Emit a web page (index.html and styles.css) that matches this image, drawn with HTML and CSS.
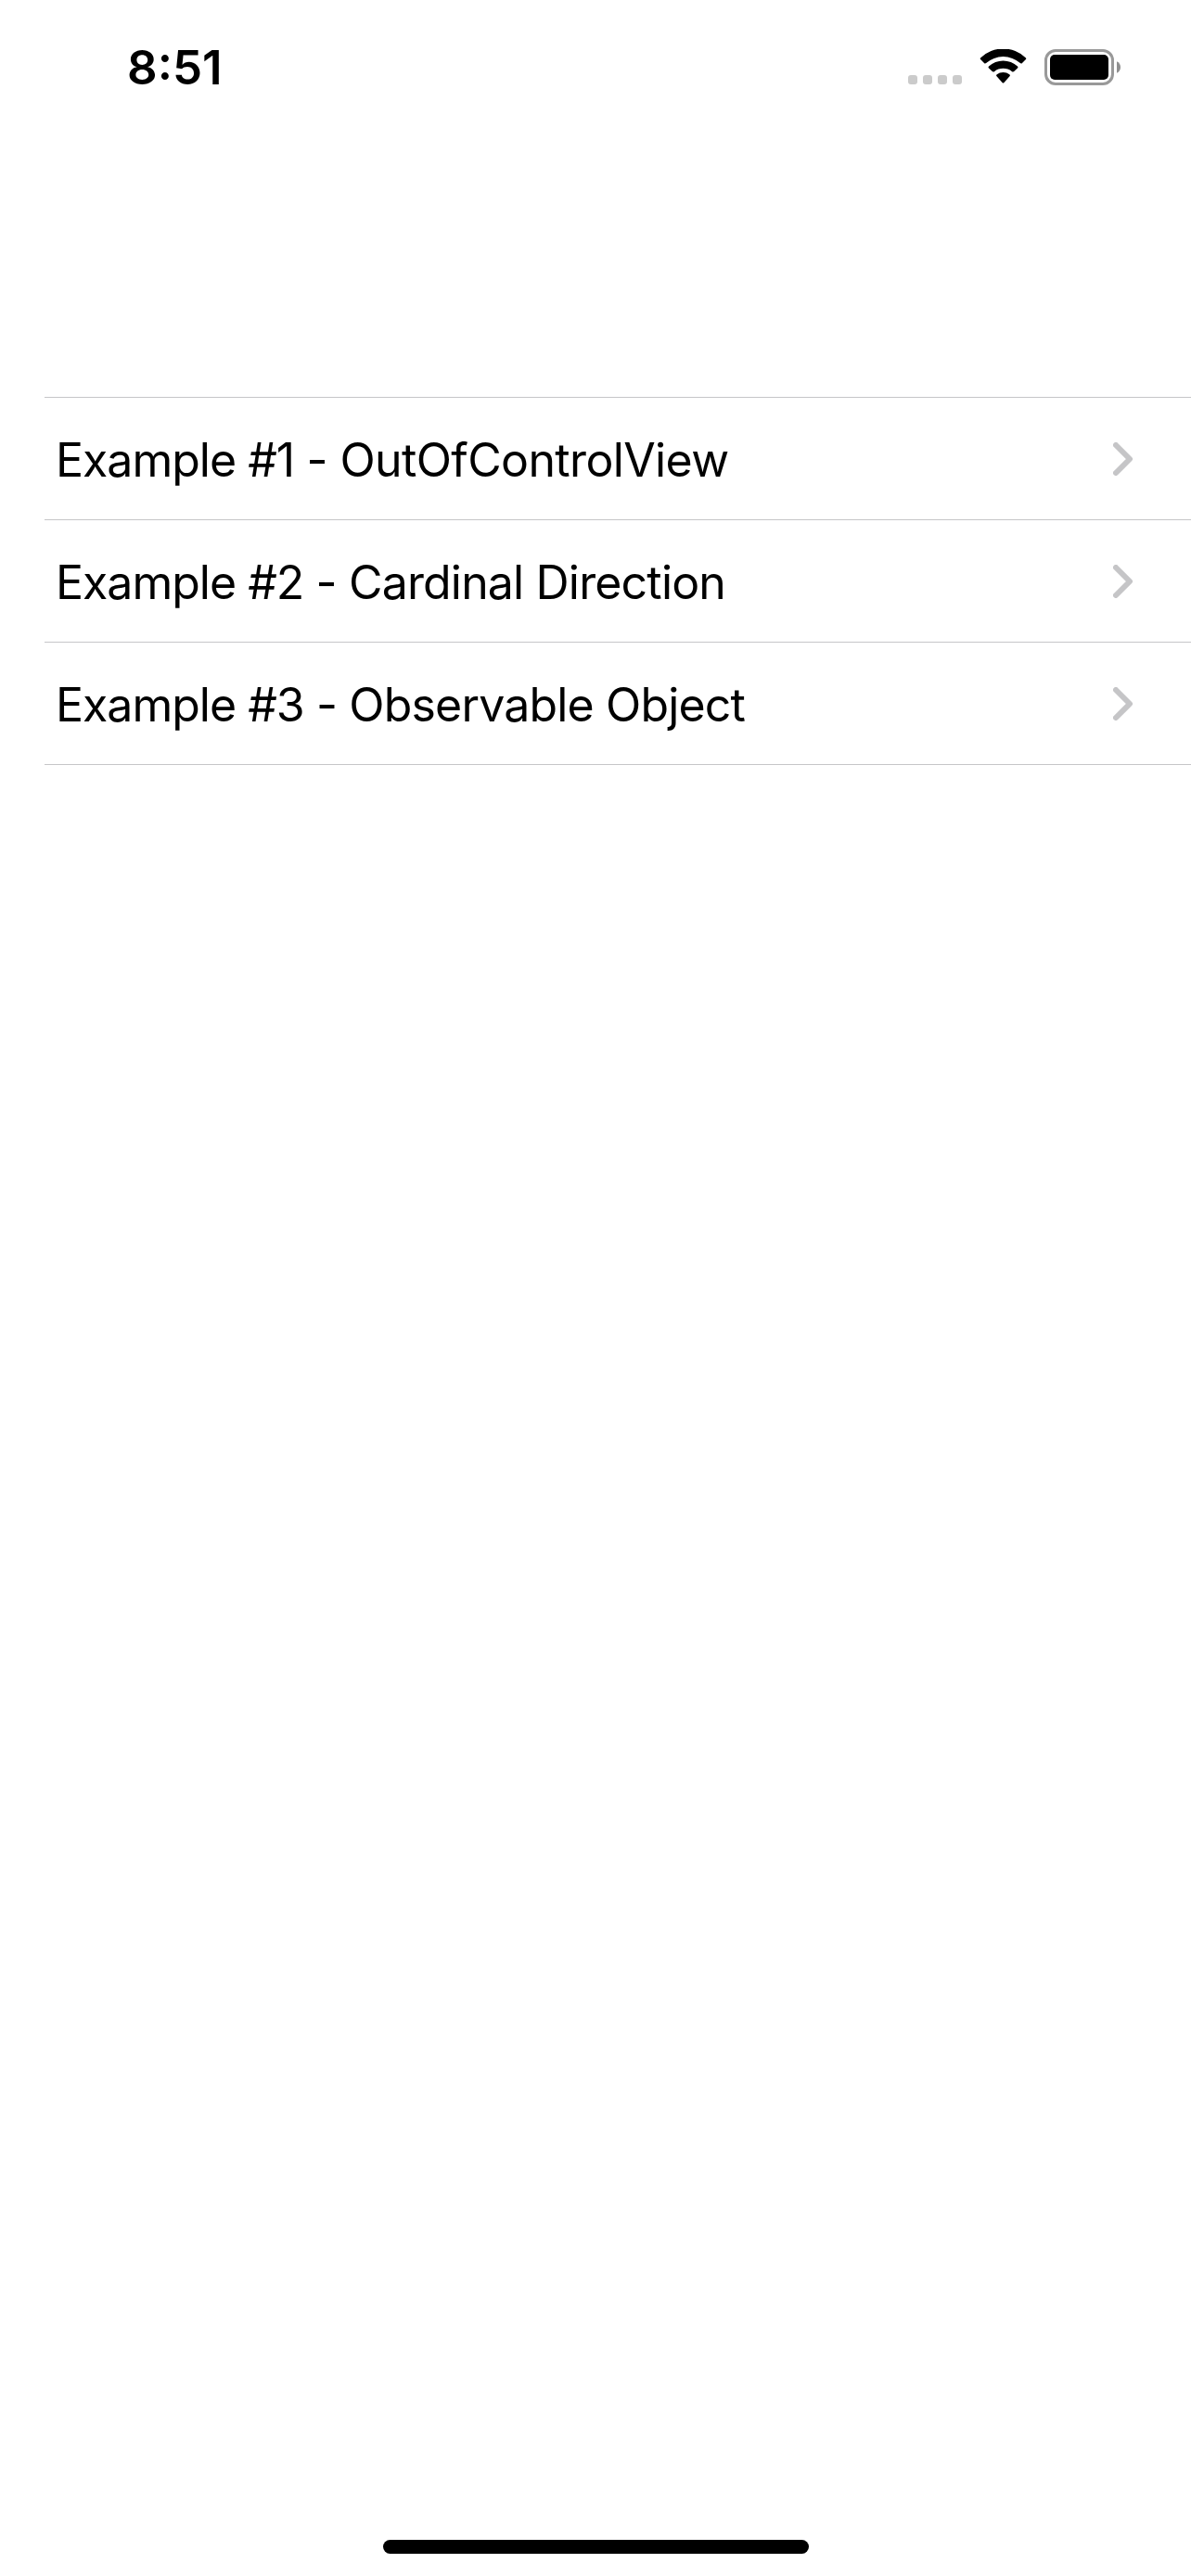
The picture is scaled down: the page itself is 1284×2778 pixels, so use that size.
FILE: index.html
```html
<!DOCTYPE html>
<html lang="en">
<head>
<meta charset="utf-8">
<title>Examples</title>
<link rel="stylesheet" href="styles.css">
</head>
<body>
<div class="screen">
  <header class="status-bar">
    <span class="time">8:51</span>
    <div class="indicators">
      <svg class="signal" width="58" height="10" viewBox="0 0 58 10" fill="#cbcbcb">
        <rect width="10" height="10" rx="3"/>
        <rect x="16" width="10" height="10" rx="3"/>
        <rect x="32" width="10" height="10" rx="3"/>
        <rect x="48" width="10" height="10" rx="3"/>
      </svg>
      <svg class="wifi" width="51" height="38" viewBox="0 0 51 38">
        <path d="M1.3 11.2Q0.1 10.2 1.3 9.2A35 35 0 0 1 49.700 9.2Q50.900 10.200 49.700 11.200L46 14.900Q45 15.900 43.900 15A28 28 0 0 0 7.100 15Q6 15.900 5 14.900Z"/>
        <path d="M10 20.400Q8.900 19.400 10 18.400A23 23 0 0 1 41 18.400Q42.100 19.400 41 20.400L37.200 24.100Q36.200 25 35.100 24.200A15.500 15.500 0 0 0 15.900 24.200Q14.800 25 13.800 24.100Z"/>
        <path d="M18.500 29.300Q17.400 28.200 18.700 27.300A11.200 11.200 0 0 1 32.300 27.300Q33.600 28.200 32.500 29.300L26.500 35.900Q25.500 37 24.500 35.900Z"/>
      </svg>
      <svg class="battery" width="83" height="39" viewBox="0 0 83 39">
        <rect x="1.500" y="1.500" width="72" height="36" rx="10.500" fill="none" stroke="#999" stroke-width="3"/>
        <rect x="6" y="6" width="63" height="27" rx="5"/>
        <path d="M78 13.200C80.500 14.300 82 16.700 82 19.500S80.500 24.700 78 25.800Z" fill="#8f8f8f"/>
      </svg>
    </div>
  </header>
  <ul class="list">
    <li class="row"><span class="label">Example #1<span class="name-wide"> - OutOfControlView</span></span><svg class="chevron" width="22" height="36" viewBox="0 0 22 36"><path d="M3 3L18 18L3 33"/></svg></li>
    <li class="row"><span class="label">Example #2<span class="name"> - Cardinal Direction</span></span><svg class="chevron" width="22" height="36" viewBox="0 0 22 36"><path d="M3 3L18 18L3 33"/></svg></li>
    <li class="row"><span class="label">Example #3<span class="name"> - Observable Object</span></span><svg class="chevron" width="22" height="36" viewBox="0 0 22 36"><path d="M3 3L18 18L3 33"/></svg></li>
  </ul>
  <div class="home-indicator"></div>
</div>
</body>
</html>
```
FILE: styles.css
```css
* { box-sizing: border-box; }
body { margin: 0; background: #fff; color: #000; font-family: Inter, "Liberation Sans", sans-serif; }
svg { display: block; }
.screen { display: flex; flex-direction: column; width: 1284px; height: 2778px; padding-bottom: 24px; background: #fff; }
.status-bar { display: flex; justify-content: space-between; height: 141px; padding: 0 75px 0 137px; }
.time { margin-top: 43px; font-size: 51px; line-height: 60px; font-weight: 600; }
.indicators { display: flex; margin-top: 53px; }
.signal { margin: 28px 19px 0 0; }
.wifi { margin-right: 19px; }
.list { list-style: none; margin: 287px 0 0; padding: 0 0 0 48px; }
.row { display: flex; align-items: center; justify-content: space-between; height: 132px; padding: 2px 62px 0 12px; border-top: 1px solid #c6c6c8; }
.row:last-child { height: 133px; border-bottom: 1px solid #c6c6c8; }
.label { font-size: 50px; line-height: 60px; white-space: nowrap; letter-spacing: -1px; }
.name { letter-spacing: -0.83px; }
.name-wide { letter-spacing: -0.63px; }
.chevron { margin-bottom: 2px; fill: none; stroke: #c5c5c7; stroke-width: 6; stroke-linecap: round; stroke-linejoin: round; }
.home-indicator { width: 459px; height: 15px; margin: auto auto 0 413px; border-radius: 8px; background: #000; }
```
